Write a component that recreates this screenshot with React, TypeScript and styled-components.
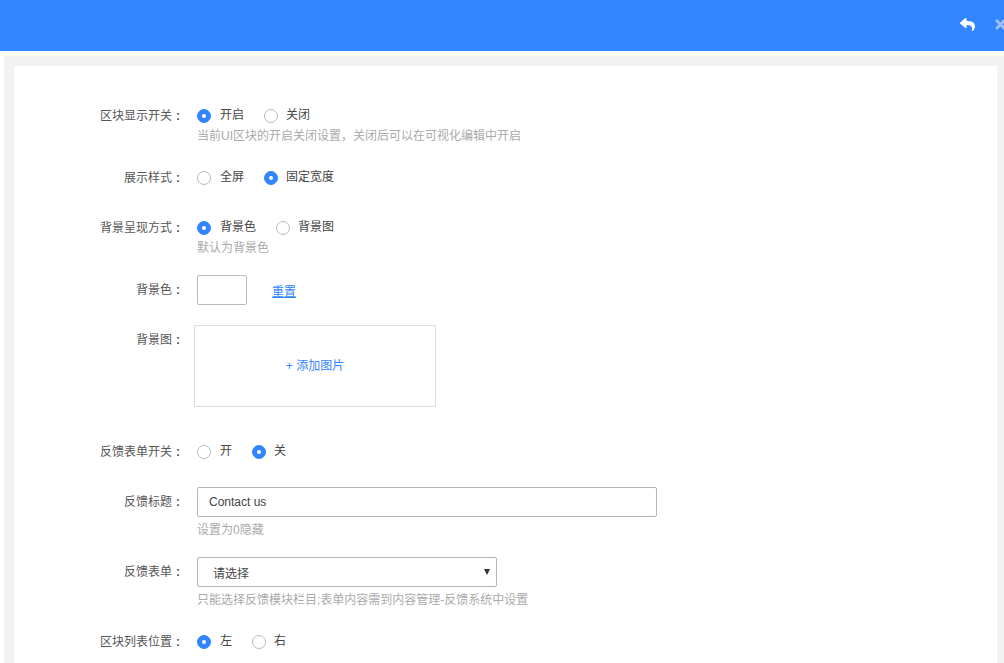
import React from "react";
import styled, { createGlobalStyle } from "styled-components";
import { FaReply, FaTimes } from "react-icons/fa";

const Global = createGlobalStyle`
  html, body { margin: 0; padding: 0; height: 100%; overflow: hidden; background: #fff; }
  body { font-family: "Liberation Sans", "Noto Sans CJK SC", sans-serif; font-size: 12px; color: #444; }
`;

const Header = styled.header`
  height: 51px;
  background: #3385ff;
  display: flex;
  align-items: center;
  justify-content: flex-end;
  gap: 18px;
  margin-bottom: 5px;
  margin-right: -4px;
  overflow: hidden;
  padding-bottom: 2px;
  box-sizing: border-box;
`;

const HeaderIcon = styled.span<{ $dim?: boolean }>`
  display: flex;
  color: #fff;
  font-size: 15px;
  opacity: ${(p) => (p.$dim ? 0.5 : 1)};
`;

const Shell = styled.main`
  margin-left: 4px;
  background: #f2f2f2;
  padding: 10px 7px 10px 10px;
`;

const Card = styled.section`
  background: #fff;
  padding: 39px 0 60px;
`;

const Row = styled.div<{ $top?: number }>`
  display: grid;
  grid-template-columns: 170px 1fr;
  column-gap: 13px;
  margin-top: ${(p) => p.$top ?? 0}px;
  line-height: 20px;
`;

const Label = styled.label<{ $offset?: number }>`
  display: flex;
  justify-content: flex-end;
  color: #555;
  height: 20px;
  line-height: 22px;
  padding-top: ${(p) => p.$offset ?? 0}px;
`;

const Colon = styled.span`
  width: 12px;
  text-align: center;
  font-weight: 700;
`;

const Control = styled.div`
  min-width: 0;
`;

const Radios = styled.div`
  display: flex;
  gap: 20px;
  height: 20px;
  align-items: center;
`;

const RadioItem = styled.span`
  display: inline-flex;
  align-items: center;
  gap: 8px;
  color: #444;
  line-height: 20px;
  &:first-child {
    gap: 9px;
  }
`;

const RadioDot = styled.i<{ $on?: boolean }>`
  width: 14px;
  height: 14px;
  box-sizing: border-box;
  border-radius: 50%;
  background: ${(p) => (p.$on ? "#3385ff" : "#fff")};
  border: 1px solid ${(p) => (p.$on ? "#3385ff" : "#bbb")};
  display: flex;
  align-items: center;
  justify-content: center;
  margin-top: 1px;
  &::after {
    content: "";
    width: 4px;
    height: 4px;
    border-radius: 50%;
    background: ${(p) => (p.$on ? "#fff" : "transparent")};
  }
`;

const Hint = styled.div<{ $top?: number }>`
  color: #aaa;
  height: 20px;
  line-height: 22px;
  margin-top: ${(p) => p.$top ?? 0}px;
`;

const ColorLine = styled.div`
  display: flex;
  align-items: center;
  gap: 25px;
`;

const Swatch = styled.div`
  width: 50px;
  height: 30px;
  box-sizing: border-box;
  border: 1px solid #bbb;
  border-radius: 2px;
  background: #fff;
`;

const ResetLink = styled.a`
  color: #3385ff;
  text-decoration: underline;
  margin-top: 4px;
`;

const UploadBox = styled.div`
  width: 242px;
  height: 82px;
  box-sizing: border-box;
  margin-left: -3px;
  border: 1px solid #ddd;
  color: #3385ff;
  display: flex;
  align-items: center;
  justify-content: center;
`;

const TextInput = styled.input`
  display: block;
  width: 460px;
  height: 30px;
  box-sizing: border-box;
  border: 1px solid #b5b5b5;
  border-radius: 2px;
  padding: 0 11px;
  font: inherit;
  color: #444;
  outline: none;
`;

const SelectWrap = styled.div`
  position: relative;
  width: 300px;
  &::after {
    content: "";
    position: absolute;
    right: 7px;
    top: 12px;
    border-style: solid;
    border-width: 6px 3px 0;
    border-color: #333 transparent transparent;
    pointer-events: none;
  }
`;

const Select = styled.select`
  display: block;
  width: 100%;
  height: 30px;
  box-sizing: border-box;
  border: 1px solid #b5b5b5;
  border-radius: 2px;
  padding: 4px 15px 0;
  appearance: none;
  font: inherit;
  color: #444;
  background: #fff;
  outline: none;
`;

type Opt = { text: string; on?: boolean };

const RadioGroup = ({ options }: { options: Opt[] }) => (
  <Radios>
    {options.map((o) => (
      <RadioItem key={o.text}>
        <RadioDot $on={o.on} />
        {o.text}
      </RadioItem>
    ))}
  </Radios>
);

const FieldLabel = ({ text, offset }: { text: string; offset?: number }) => (
  <Label $offset={offset}>
    {text}
    <Colon>:</Colon>
  </Label>
);

export default function App() {
  return (
    <>
      <Global />
      <Header>
        <HeaderIcon><FaReply /></HeaderIcon>
        <HeaderIcon $dim><FaTimes /></HeaderIcon>
      </Header>
      <Shell>
        <Card>
          <Row>
            <FieldLabel text="区块显示开关" />
            <Control>
              <RadioGroup options={[{ text: "开启", on: true }, { text: "关闭" }]} />
              <Hint>当前UI区块的开启关闭设置，关闭后可以在可视化编辑中开启</Hint>
            </Control>
          </Row>
          <Row $top={22}>
            <FieldLabel text="展示样式" />
            <Control>
              <RadioGroup options={[{ text: "全屏" }, { text: "固定宽度", on: true }]} />
            </Control>
          </Row>
          <Row $top={30}>
            <FieldLabel text="背景呈现方式" />
            <Control>
              <RadioGroup options={[{ text: "背景色", on: true }, { text: "背景图" }]} />
              <Hint>默认为背景色</Hint>
            </Control>
          </Row>
          <Row $top={18}>
            <FieldLabel text="背景色" offset={4} />
            <ColorLine>
              <Swatch />
              <ResetLink>重置</ResetLink>
            </ColorLine>
          </Row>
          <Row $top={20}>
            <FieldLabel text="背景图" offset={4} />
            <Control>
              <UploadBox>+ 添加图片</UploadBox>
            </Control>
          </Row>
          <Row $top={34}>
            <FieldLabel text="反馈表单开关" />
            <Control>
              <RadioGroup options={[{ text: "开" }, { text: "关", on: true }]} />
            </Control>
          </Row>
          <Row $top={26}>
            <FieldLabel text="反馈标题" offset={4} />
            <Control>
              <TextInput defaultValue="Contact us" />
              <Hint $top={2}>设置为0隐藏</Hint>
            </Control>
          </Row>
          <Row $top={18}>
            <FieldLabel text="反馈表单" offset={4} />
            <Control>
              <SelectWrap>
                <Select defaultValue="">
                  <option value="">请选择</option>
                </Select>
              </SelectWrap>
              <Hint $top={2}>只能选择反馈模块栏目;表单内容需到内容管理-反馈系统中设置</Hint>
            </Control>
          </Row>
          <Row $top={22}>
            <FieldLabel text="区块列表位置" />
            <Control>
              <RadioGroup options={[{ text: "左", on: true }, { text: "右" }]} />
            </Control>
          </Row>
        </Card>
      </Shell>
    </>
  );
}
